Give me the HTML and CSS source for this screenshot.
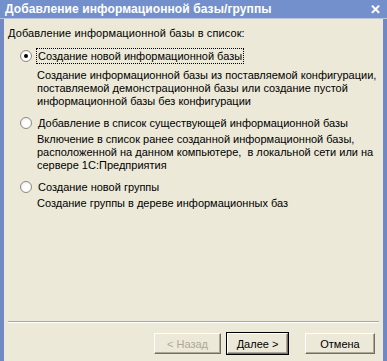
FILE: index.html
```html
<!DOCTYPE html>
<html lang="ru">
<head>
<meta charset="utf-8">
<link rel="stylesheet" href="styles.css">
</head>
<body>
<div class="window">
  <div class="titlebar">
    <span class="title">Добавление информационной базы/группы</span>
    <span class="close">✕</span>
  </div>
  <div class="content">
    <div class="heading">Добавление информационной базы в список:</div>
    <div class="options">
      <div class="option">
        <div class="row"><span class="radio checked"></span><span class="label focus">Создание новой информационной базы</span></div>
        <div class="desc">Создание информационной базы из поставляемой конфигурации,<br>поставляемой демонстрационной базы или создание пустой<br>информационной базы без конфигурации</div>
      </div>
      <div class="option">
        <div class="row"><span class="radio"></span><span class="label">Добавление в список существующей информационной базы</span></div>
        <div class="desc tight">Включение в список ранее созданной информационной базы,<br>расположенной на данном компьютере,&nbsp; в локальной сети или на<br>сервере 1С:Предприятия</div>
      </div>
      <div class="option">
        <div class="row"><span class="radio"></span><span class="label">Создание новой группы</span></div>
        <div class="desc tight">Создание группы в дереве информационных баз</div>
      </div>
    </div>
    <div class="separator"></div>
    <div class="buttons">
      <button class="btn disabled">&lt; Назад</button>
      <button class="btn default">Далее &gt;</button>
      <button class="btn cancel">Отмена</button>
    </div>
  </div>
</div>
</body>
</html>
```
FILE: styles.css
```css
* { box-sizing: border-box; }
html, body { margin: 0; padding: 0; }
body {
  width: 387px;
  height: 361px;
  overflow: hidden;
  font-family: "Liberation Sans", Arial, sans-serif;
  font-size: 11px;
  color: #000;
  background: #ece9d8;
}
.window {
  width: 387px;
  height: 361px;
  display: flex;
  flex-direction: column;
  background: #ece9d8;
  border-left: 4px solid #7088c4;
  border-right: 4px solid #7088c4;
}
.titlebar {
  height: 19px;
  margin: 0 -4px;
  padding: 0 6px 0 5px;
  background: #7390cc;
  display: flex;
  align-items: center;
  justify-content: space-between;
  border-bottom: 1px solid #b9c4dd;
}
.title {
  color: #fff;
  font-weight: bold;
  font-size: 12px;
  letter-spacing: 0.1px;
}
.close {
  color: #fff;
  font-weight: bold;
  font-size: 13px;
}
.content {
  flex: 1;
  padding: 8px 4px 0 4px;
  display: flex;
  flex-direction: column;
}
.heading {
  line-height: 13px;
  letter-spacing: 0.1px;
}
.options {
  display: flex;
  flex-direction: column;
  gap: 7px;
  padding-top: 8px;
  padding-left: 12px;
  flex: 1;
}
.row {
  display: flex;
  align-items: center;
  height: 16px;
}
.radio {
  width: 12px;
  height: 12px;
  border-radius: 50%;
  border: 1px solid #8a8a80;
  background: radial-gradient(circle at 60% 60%, #ffffff 40%, #e6e4dc 100%);
  display: inline-flex;
  align-items: center;
  justify-content: center;
  flex: none;
}
.radio.checked::after {
  content: "";
  width: 4px;
  height: 4px;
  border-radius: 50%;
  background: #000;
}
.label {
  margin-left: 4px;
  padding: 1px 1px;
  line-height: 12px;
  border: 1px solid transparent;
}
.label.focus {
  border: 1px dotted #000;
}
.desc {
  padding-left: 17px;
  margin-top: 5px;
  line-height: 13px;
}
.desc.tight { margin-top: 2px; }
.separator {
  height: 2px;
  border-top: 1px solid #aca899;
  border-bottom: 1px solid #fff;
  margin-bottom: 10px;
}
.buttons {
  display: flex;
  justify-content: flex-end;
  padding-right: 4px;
  height: 28px;
  align-items: flex-start;
}
.btn {
  font-family: "Liberation Sans", Arial, sans-serif;
  font-size: 11px;
  height: 21px;
  width: 70px;
  background: #ece9d8;
  border: 1px solid;
  border-color: #fff #716f64 #716f64 #fff;
  box-shadow: inset -1px -1px 0 #aca899;
  padding: 0;
  color: #000;
}
.btn.disabled { color: #aca899; width: 67px; margin-right: 6px; }
.btn.default {
  width: 61px;
  outline: 1px solid #000;
  margin-right: 17px;
}
```
